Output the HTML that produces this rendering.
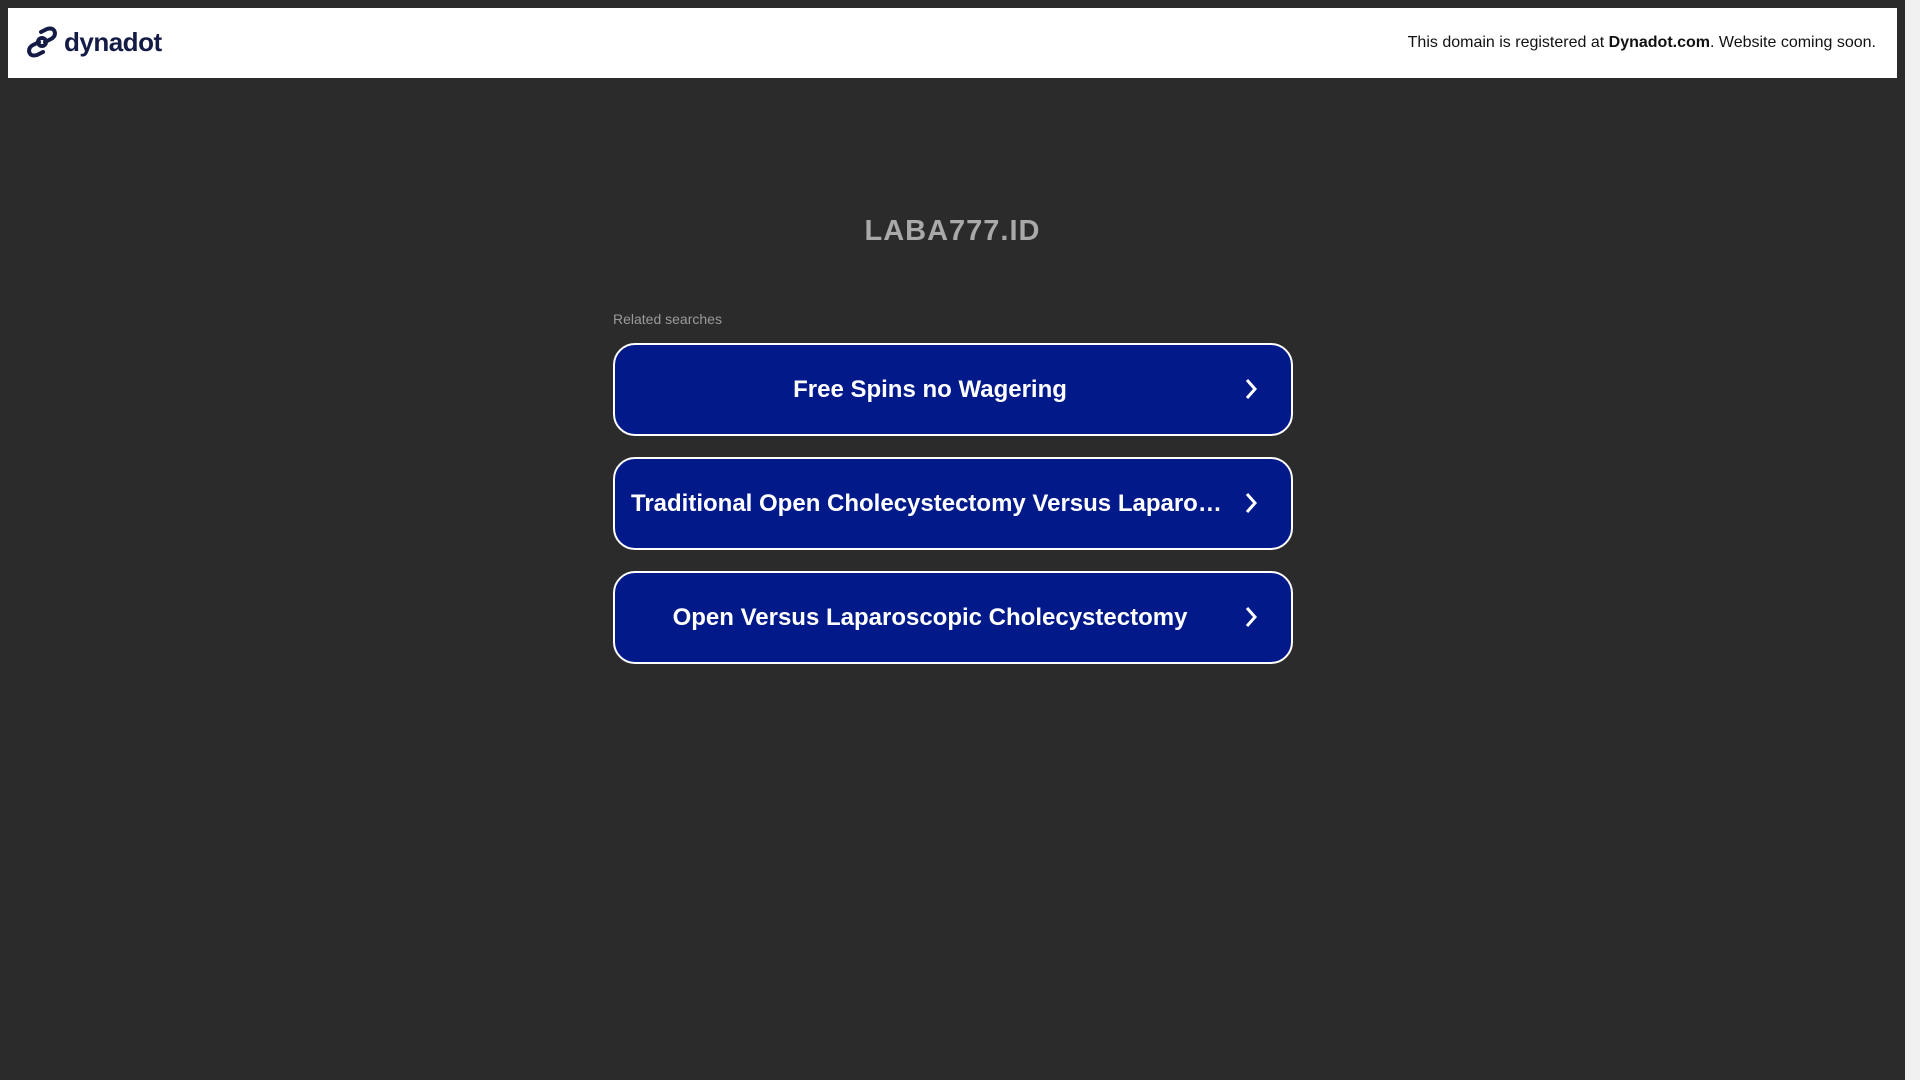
<!DOCTYPE html>
<html><head><style>
html,body{margin:0;padding:0;}
body{width:1920px;height:1080px;background:#2b2b2b;font-family:"Liberation Sans",sans-serif;position:relative;overflow:hidden;}
.hdr{position:absolute;left:8px;top:8px;width:1889px;height:70px;background:#fff;}
.logo{position:absolute;left:19px;top:18px;display:flex;align-items:center;}
.logo span{font-size:26px;font-weight:bold;color:#141b45;margin-left:7px;letter-spacing:-0.5px;}
.reg{position:absolute;right:21px;top:26px;font-size:16px;color:#111;}
.sb{position:absolute;right:0;top:0;width:15px;height:1080px;background:#f1f1f1;}
.title{position:absolute;left:0;width:1905px;top:215px;text-align:center;font-size:29px;font-weight:bold;color:#a9a9a9;letter-spacing:1px;}
.rel{position:absolute;left:613px;top:311px;font-size:14px;color:#9a9a9a;}
.btn{position:absolute;left:613px;width:676px;height:89px;border:2px solid #fff;border-radius:22px;background:#021989;color:#fff;font-size:24px;font-weight:bold;box-sizing:content-box;}
.btn .t{position:absolute;left:16px;right:62px;top:0;line-height:89px;text-align:center;white-space:nowrap;overflow:hidden;text-overflow:ellipsis;}
.btn svg{position:absolute;right:33px;top:33px;}
</style></head><body>
<div class="hdr">
 <div class="logo">
  <svg width="30" height="32" viewBox="0 0 30 32" fill="none" stroke="#141b45" stroke-width="4" stroke-linecap="round"><path d="M14 6 L20 3 Q27 1 28 7 Q28 11 24 13 L18 16"/><path d="M16 26 L10 29 Q3 31 2 25 Q2 21 6 19 L12 16"/><circle cx="15" cy="16" r="4"/></svg>
  <span>dynadot</span>
 </div>
 <div class="reg">This domain is registered at <b>Dynadot.com</b>. Website coming soon.</div>
</div>
<div class="sb"></div>
<div class="title">LABA777.ID</div>
<div class="rel">Related searches</div>
<div class="btn" style="top:343px"><div class="t">Free Spins no Wagering</div><svg width="14" height="22" viewBox="0 0 14 22"><path d="M3 2 L11 11 L3 20" stroke="#fff" stroke-width="3" fill="none"/></svg></div>
<div class="btn" style="top:457px"><div class="t" style="text-align:left">Traditional Open Cholecystectomy Versus Laparoscopic Cholecystectomy</div><svg width="14" height="22" viewBox="0 0 14 22"><path d="M3 2 L11 11 L3 20" stroke="#fff" stroke-width="3" fill="none"/></svg></div>
<div class="btn" style="top:571px"><div class="t">Open Versus Laparoscopic Cholecystectomy</div><svg width="14" height="22" viewBox="0 0 14 22"><path d="M3 2 L11 11 L3 20" stroke="#fff" stroke-width="3" fill="none"/></svg></div>
</body></html>
